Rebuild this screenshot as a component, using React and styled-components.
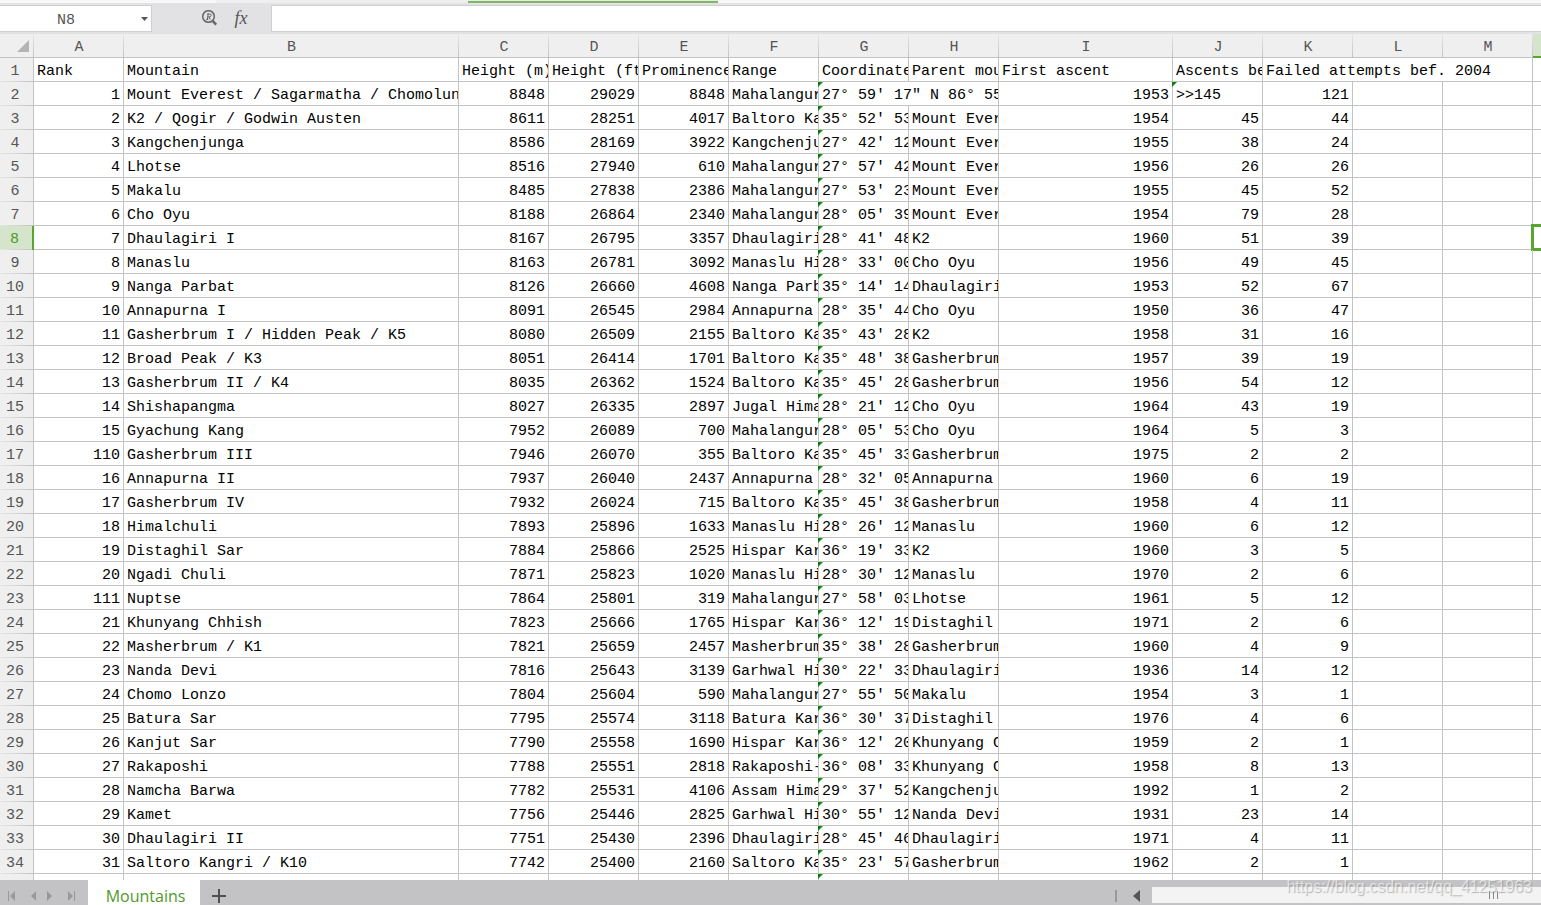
import React, { useState } from "react";
import styled, { createGlobalStyle } from "styled-components";

const columns = [
  { name: "A", width: 90 },
  { name: "B", width: 335 },
  { name: "C", width: 90 },
  { name: "D", width: 90 },
  { name: "E", width: 90 },
  { name: "F", width: 90 },
  { name: "G", width: 90 },
  { name: "H", width: 90 },
  { name: "I", width: 174 },
  { name: "J", width: 90 },
  { name: "K", width: 90 },
  { name: "L", width: 90 },
  { name: "M", width: 90 },
];

// rank, mountain, height (m), height (ft), prominence, range, coordinates, parent, first ascent, ascents, failed
const mountains = [
  [1, "Mount Everest / Sagarmatha / Chomolung", 8848, 29029, 8848, "Mahalangur", "27° 59′ 17″ N 86° 55", "", 1953, ">>145", 121],
  [2, "K2 / Qogir / Godwin Austen", 8611, 28251, 4017, "Baltoro Ka", "35° 52′ 53", "Mount Ever", 1954, 45, 44],
  [3, "Kangchenjunga", 8586, 28169, 3922, "Kangchenju", "27° 42′ 12", "Mount Ever", 1955, 38, 24],
  [4, "Lhotse", 8516, 27940, 610, "Mahalangur", "27° 57′ 42", "Mount Ever", 1956, 26, 26],
  [5, "Makalu", 8485, 27838, 2386, "Mahalangur", "27° 53′ 23", "Mount Ever", 1955, 45, 52],
  [6, "Cho Oyu", 8188, 26864, 2340, "Mahalangur", "28° 05′ 39", "Mount Ever", 1954, 79, 28],
  [7, "Dhaulagiri I", 8167, 26795, 3357, "Dhaulagiri", "28° 41′ 48", "K2", 1960, 51, 39],
  [8, "Manaslu", 8163, 26781, 3092, "Manaslu Hi", "28° 33′ 00", "Cho Oyu", 1956, 49, 45],
  [9, "Nanga Parbat", 8126, 26660, 4608, "Nanga Parb", "35° 14′ 14", "Dhaulagiri", 1953, 52, 67],
  [10, "Annapurna I", 8091, 26545, 2984, "Annapurna", "28° 35′ 44", "Cho Oyu", 1950, 36, 47],
  [11, "Gasherbrum I / Hidden Peak / K5", 8080, 26509, 2155, "Baltoro Ka", "35° 43′ 28", "K2", 1958, 31, 16],
  [12, "Broad Peak / K3", 8051, 26414, 1701, "Baltoro Ka", "35° 48′ 38", "Gasherbrum", 1957, 39, 19],
  [13, "Gasherbrum II / K4", 8035, 26362, 1524, "Baltoro Ka", "35° 45′ 28", "Gasherbrum", 1956, 54, 12],
  [14, "Shishapangma", 8027, 26335, 2897, "Jugal Hima", "28° 21′ 12", "Cho Oyu", 1964, 43, 19],
  [15, "Gyachung Kang", 7952, 26089, 700, "Mahalangur", "28° 05′ 53", "Cho Oyu", 1964, 5, 3],
  [110, "Gasherbrum III", 7946, 26070, 355, "Baltoro Ka", "35° 45′ 33", "Gasherbrum", 1975, 2, 2],
  [16, "Annapurna II", 7937, 26040, 2437, "Annapurna", "28° 32′ 05", "Annapurna", 1960, 6, 19],
  [17, "Gasherbrum IV", 7932, 26024, 715, "Baltoro Ka", "35° 45′ 38", "Gasherbrum", 1958, 4, 11],
  [18, "Himalchuli", 7893, 25896, 1633, "Manaslu Hi", "28° 26′ 12", "Manaslu", 1960, 6, 12],
  [19, "Distaghil Sar", 7884, 25866, 2525, "Hispar Kar", "36° 19′ 33", "K2", 1960, 3, 5],
  [20, "Ngadi Chuli", 7871, 25823, 1020, "Manaslu Hi", "28° 30′ 12", "Manaslu", 1970, 2, 6],
  [111, "Nuptse", 7864, 25801, 319, "Mahalangur", "27° 58′ 03", "Lhotse", 1961, 5, 12],
  [21, "Khunyang Chhish", 7823, 25666, 1765, "Hispar Kar", "36° 12′ 19", "Distaghil", 1971, 2, 6],
  [22, "Masherbrum / K1", 7821, 25659, 2457, "Masherbrum", "35° 38′ 28", "Gasherbrum", 1960, 4, 9],
  [23, "Nanda Devi", 7816, 25643, 3139, "Garhwal Hi", "30° 22′ 33", "Dhaulagiri", 1936, 14, 12],
  [24, "Chomo Lonzo", 7804, 25604, 590, "Mahalangur", "27° 55′ 50", "Makalu", 1954, 3, 1],
  [25, "Batura Sar", 7795, 25574, 3118, "Batura Kar", "36° 30′ 37", "Distaghil", 1976, 4, 6],
  [26, "Kanjut Sar", 7790, 25558, 1690, "Hispar Kar", "36° 12′ 20", "Khunyang C", 1959, 2, 1],
  [27, "Rakaposhi", 7788, 25551, 2818, "Rakaposhi-", "36° 08′ 33", "Khunyang C", 1958, 8, 13],
  [28, "Namcha Barwa", 7782, 25531, 4106, "Assam Hima", "29° 37′ 52", "Kangchenju", 1992, 1, 2],
  [29, "Kamet", 7756, 25446, 2825, "Garhwal Hi", "30° 55′ 12", "Nanda Devi", 1931, 23, 14],
  [30, "Dhaulagiri II", 7751, 25430, 2396, "Dhaulagiri", "28° 45′ 46", "Dhaulagiri", 1971, 4, 11],
  [31, "Saltoro Kangri / K10", 7742, 25400, 2160, "Saltoro Ka", "35° 23′ 57", "Gasherbrum", 1962, 2, 1],
];

const titles = [
  "Rank",
  "Mountain",
  "Height (m)",
  "Height (ft",
  "Prominence",
  "Range",
  "Coordinate",
  "Parent mou",
  "First ascent",
  "Ascents be",
  "Failed attempts bef. 2004",
];

const COORDINATES = 6;
const PARENT = 7;

const App = () => {
  const [formula, setFormula] = useState("");
  const [cellName, setCellName] = useState("N8");

  return (
    <Window>
      <GlobalStyle />
      <RibbonEdge>
        <RibbonTabs />
        <RibbonGap />
        <ActiveTabLine />
      </RibbonEdge>
      <FormulaBar>
        <NameBox>
          <NameInput aria-label='Cell name' value={cellName} onChange={e => setCellName(e.currentTarget.value)} />
          <NameArrow type='button' aria-label='Cell list'>
            <svg width='7' height='4' viewBox='0 0 7 4'>
              <path d='M0 0h7L3.5 4z' fill='#555' />
            </svg>
          </NameArrow>
        </NameBox>
        <FormulaTools>
          <ToolButton type='button' aria-label='Look up'>
            <svg width='18' height='18' viewBox='0 0 18 18' fill='none' stroke='#666'>
              <circle cx='7.5' cy='6.5' r='5.8' strokeWidth='1.5' />
              <path d='M11.6 10.8l3.6 3.8' strokeWidth='2.4' />
              <path d='M6.2 9.5l1-5.5h1.6q1.6 0 1.2 1.6t-2 1.3H7m1.1 0l1 2.6M5.2 9.5h2M6 4h2' strokeWidth='1' />
            </svg>
          </ToolButton>
          <FxButton type='button'>fx</FxButton>
        </FormulaTools>
        <FormulaInput aria-label='Formula' value={formula} onChange={e => setFormula(e.currentTarget.value)} />
      </FormulaBar>
      <SheetArea>
        <Sheet>
          <colgroup>
            <Col $width={34} />
            {columns.map(column => (
              <Col key={column.name} $width={column.width} />
            ))}
            <col />
          </colgroup>
          <thead>
            <tr>
              <Corner>
                <svg width='12' height='12' viewBox='0 0 12 12'>
                  <path d='M12 0v12H0z' fill='#b4b4b4' />
                </svg>
              </Corner>
              {columns.map(column => (
                <ColumnHead key={column.name} scope='col'>
                  {column.name}
                </ColumnHead>
              ))}
              <ColumnHead scope='col' aria-label='N' $selected />
            </tr>
          </thead>
          <tbody>
            <tr>
              <RowHead scope='row'>1</RowHead>
              {titles.map((title, i) => (
                <Cell key={title} colSpan={i === titles.length - 1 ? 3 : 1}>
                  <CellText>{title}</CellText>
                </Cell>
              ))}
              <Cell />
            </tr>
            {mountains.map((mountain, i) => (
              <MountainRow key={mountain[0]} number={i + 2} values={mountain} selected={i + 2 === 8} />
            ))}
            <MountainRow number='' values={Array(11).fill("")} />
          </tbody>
        </Sheet>
      </SheetArea>
      <TabBar>
        <SheetNav>
          <NavPair>
            <NavButton type='button' aria-label='First sheet'>
              <svg width='8' height='10' viewBox='0 0 8 10'>
                <path d='M0 0h1v10H0zM7 0v10L2 5z' />
              </svg>
            </NavButton>
            <NavButton type='button' aria-label='Previous sheet'>
              <svg width='6' height='10' viewBox='0 0 6 10'>
                <path d='M5 0v10L0 5z' />
              </svg>
            </NavButton>
          </NavPair>
          <NavPair>
            <NavButton type='button' aria-label='Next sheet'>
              <svg width='6' height='10' viewBox='0 0 6 10'>
                <path d='M0 0v10l5-5z' />
              </svg>
            </NavButton>
            <NavButton type='button' aria-label='Last sheet'>
              <svg width='8' height='10' viewBox='0 0 8 10'>
                <path d='M0 0v10l5-5zM6 0h1v10H6z' />
              </svg>
            </NavButton>
          </NavPair>
        </SheetNav>
        <SheetTab type='button'>Mountains</SheetTab>
        <AddButton type='button' aria-label='Add sheet'>
          <svg width='14' height='14' viewBox='0 0 14 14'>
            <path d='M7 0v14M0 7h14' stroke='#505050' strokeWidth='2' />
          </svg>
        </AddButton>
        <Splitter />
        <ScrollLeft type='button' aria-label='Scroll left'>
          <svg width='7' height='12' viewBox='0 0 7 12'>
            <path d='M7 0v12L0 6z' fill='#555' />
          </svg>
        </ScrollLeft>
        <ScrollThumb>
          <Grip />
        </ScrollThumb>
        <Watermark>https://blog.csdn.net/qq_41251963</Watermark>
      </TabBar>
    </Window>
  );
};

const MountainRow = ({ number, values, selected }) => {
  // long coordinates run on into an empty parent cell
  const spill = values[COORDINATES] !== "" && values[PARENT] === "";

  return (
    <tr>
      <RowHead scope='row' $selected={selected}>
        {number}
      </RowHead>
      {values.map((value, i) => {
        if (spill && i === PARENT) return null;
        const flagged = i === COORDINATES || (i === 9 && typeof value === "string" && value !== "");
        return (
          <Cell key={i} colSpan={spill && i === COORDINATES ? 2 : 1}>
            {flagged && <Flag />}
            <CellText $number={typeof value === "number"}>{value}</CellText>
          </Cell>
        );
      })}
      <Cell />
      <Cell />
      <Cell>{selected && <Selection />}</Cell>
    </tr>
  );
};

const GlobalStyle = createGlobalStyle`
  * {
    box-sizing: border-box;
  }
  body {
    margin: 0;
    overflow: hidden;
  }
  button, input {
    margin: 0;
    padding: 0;
    border: none;
    border-radius: 0;
    background: transparent;
    outline: none;
  }
  svg {
    display: block;
  }
`;

const Window = styled.main`
  display: flex;
  flex-direction: column;
  height: 100vh;
  background: #fff;
  color: #000;
  font-family: "Liberation Mono", monospace;
  font-size: 15px;
`;

const RibbonEdge = styled.div`
  flex: none;
  display: flex;
  height: 3px;
  background: #f8f8f8;
`;
const RibbonTabs = styled.div`
  width: 216px;
  background: #f8f8f8;
`;
const RibbonGap = styled.div`
  width: 252px;
  background: #efefef;
`;
const ActiveTabLine = styled.div`
  width: 250px;
  border-top: 1px solid #e4eedf;
  background: #82b567;
`;

const FormulaBar = styled.div`
  flex: none;
  display: flex;
  height: 31px;
  padding: 2px 0;
  background: #e2e2e4;
`;
const NameBox = styled.div`
  display: flex;
  width: 152px;
  border: 1px solid #cfcfd1;
  border-left: none;
  background: #fff;
`;
const NameInput = styled.input`
  flex: 1;
  min-width: 0;
  padding-top: 3px;
  text-align: center;
  color: #555;
  font-family: inherit;
  font-size: 15px;
`;
const NameArrow = styled.button`
  display: flex;
  align-items: center;
  justify-content: center;
  width: 16px;
  margin-left: 4px;
  margin-right: -1px;
`;
const FormulaTools = styled.div`
  display: flex;
  justify-content: flex-end;
  align-items: center;
  gap: 12px;
  width: 119px;
  padding-right: 20px;
`;
const ToolButton = styled.button`
  width: 18px;
  height: 18px;
`;
const FxButton = styled.button`
  width: 20px;
  color: #555;
  font: italic 18px "Liberation Serif", serif;
`;
const FormulaInput = styled.input`
  flex: 1;
  min-width: 0;
  border: 1px solid #cfcfd1;
  border-right: none;
  background: #fff;
  font-family: inherit;
  font-size: 15px;
`;

const SheetArea = styled.section`
  flex: 1;
  min-height: 0;
  overflow: hidden;
`;
const Sheet = styled.table`
  table-layout: fixed;
  width: 100%;
  border-collapse: separate;
  border-spacing: 0;
`;
const Col = styled.col`
  width: ${props => props.$width}px;
`;
const Corner = styled.td`
  height: 24px;
  padding: 0 0 0 17px;
  border-bottom: 1px solid #c3c3c3;
  background: linear-gradient(#e6e6e6, #c3c3c3) right / 1px 100% no-repeat #efefef;
`;
const ColumnHead = styled.th`
  height: 24px;
  padding: 4px 0 0;
  border-bottom: ${props => (props.$selected ? "2px solid #5aa532" : "1px solid #c3c3c3")};
  background: ${props =>
    props.$selected ? "#d5e5cb" : "linear-gradient(#e6e6e6, #c3c3c3) right / 1px 100% no-repeat #efefef"};
  color: #555;
  font-weight: normal;
  line-height: 18px;
`;
const RowHead = styled.th`
  height: 24px;
  padding: 5px 3px 1px 0;
  border-right: ${props => (props.$selected ? "2px solid #5aa532" : "1px solid #c3c3c3")};
  background: linear-gradient(to right, #e6e6e6, #c3c3c3) bottom / 100% 1px no-repeat
    ${props => (props.$selected ? "#d5e5cb" : "#efefef")};
  color: ${props => (props.$selected ? "#4f9a2a" : "#555")};
  font-weight: normal;
  line-height: 18px;
`;
const Cell = styled.td`
  position: relative;
  height: 24px;
  padding: 0;
  border-right: 1px solid #c3c3c3;
  border-bottom: 1px solid #c3c3c3;

  &:last-child {
    border-right: none;
  }
`;
const CellText = styled.div`
  height: 23px;
  padding: 5px ${props => (props.$number ? "3px" : "0")} 0 3px;
  overflow: hidden;
  white-space: nowrap;
  line-height: 18px;
  text-align: ${props => (props.$number ? "right" : "left")};
`;
const Flag = styled.span`
  position: absolute;
  top: 0;
  left: -1px;
  width: 5px;
  height: 5px;
  background: #0b840b;
  clip-path: polygon(0 0, 100% 0, 0 100%);
`;
const Selection = styled.div`
  position: absolute;
  top: -2px;
  right: -3px;
  bottom: -2px;
  left: -2px;
  border: 3px solid #5aa532;
`;

const TabBar = styled.footer`
  position: relative;
  flex: none;
  display: flex;
  align-items: center;
  height: 25px;
  background: #c3c3c5;
`;
const SheetNav = styled.nav`
  display: flex;
  justify-content: space-between;
  width: 88px;
  padding: 6px 12px 0 8px;
`;
const NavPair = styled.div`
  display: flex;
  gap: 15px;
`;
const NavButton = styled.button`
  fill: #99999b;
`;
const SheetTab = styled.button`
  width: 112px;
  height: 25px;
  padding: 6px 0 0 3px;
  background: #fff;
  color: #4f9a2a;
  font-family: "Open Sans", sans-serif;
  font-size: 16px;
  line-height: 20px;
`;
const AddButton = styled.button`
  width: 38px;
  padding: 6px 12px 0;
`;
const Splitter = styled.div`
  width: 2px;
  height: 12px;
  margin: 6px 16px 0 auto;
  background: #99999b;
`;
const ScrollLeft = styled.button`
  width: 19px;
  padding-top: 6px;
`;
const ScrollThumb = styled.div`
  display: flex;
  align-items: center;
  justify-content: flex-end;
  width: 389px;
  height: 16px;
  margin-top: 5px;
  padding-right: 43px;
  background: #f3f3f3;
`;
const Grip = styled.span`
  width: 9px;
  height: 8px;
  border: solid #888;
  border-width: 0 1px;
  background: linear-gradient(#888, #888) center / 1px 100% no-repeat;
`;
const Watermark = styled.span`
  position: absolute;
  right: 9px;
  bottom: 9px;
  color: rgba(255, 255, 255, 0.6);
  font-family: "Liberation Sans", sans-serif;
  font-size: 16px;
  line-height: 18px;
  text-shadow: 1px 1px 1px rgba(120, 120, 120, 0.5);
`;

export default App;
